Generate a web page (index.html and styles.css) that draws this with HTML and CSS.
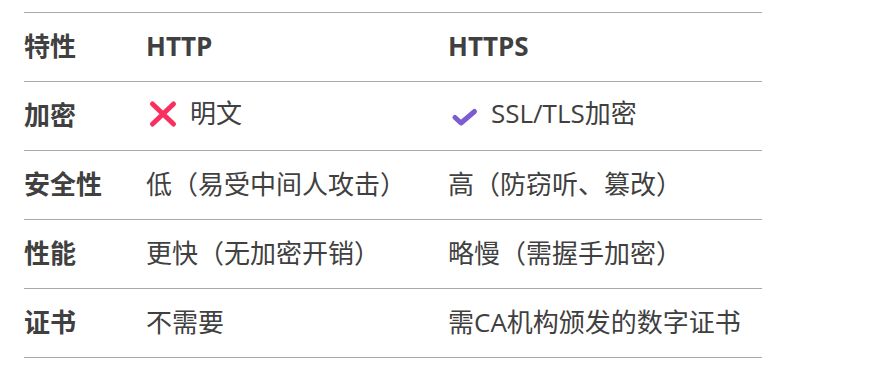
FILE: index.html
```html
<!DOCTYPE html>
<html lang="zh">
<head>
<meta charset="utf-8">
<link rel="stylesheet" href="styles.css">
</head>
<body>
<table class="compare">
  <colgroup>
    <col class="c1"><col class="c2"><col class="c3">
  </colgroup>
  <thead>
    <tr><th>特性</th><th>HTTP</th><th>HTTPS</th></tr>
  </thead>
  <tbody>
    <tr>
      <th>加密</th>
      <td><span class="icon-cell"><svg class="icon" viewBox="0 0 32 28" width="32" height="28"><path d="M6.5 4 L27.5 24 M27.5 4 L6.5 24" stroke="#f92f60" stroke-width="5" stroke-linecap="round" fill="none"/></svg>明文</span></td>
      <td><span class="icon-cell check"><svg class="icon" viewBox="0 0 32 28" width="32" height="28"><path d="M7 17.5 L13 23 L26.5 11.5" stroke="#7d5bd0" stroke-width="5" stroke-linecap="round" stroke-linejoin="round" fill="none"/></svg>SSL/TLS加密</span></td>
    </tr>
    <tr><th>安全性</th><td>低（易受中间人攻击）</td><td>高（防窃听、篡改）</td></tr>
    <tr><th>性能</th><td>更快（无加密开销）</td><td>略慢（需握手加密）</td></tr>
    <tr><th>证书</th><td>不需要</td><td>需CA机构颁发的数字证书</td></tr>
  </tbody>
</table>
</body>
</html>
```
FILE: styles.css
```css
html, body {
  margin: 0;
  padding: 0;
  background: #ffffff;
}
body {
  font-family: "Open Sans", "Noto Sans CJK SC", sans-serif;
  color: #404040;
}
.compare {
  border-collapse: collapse;
  width: 738px;
  margin: 12px 0 0 24px;
  font-size: 26px;
}
.c1 { width: 122px; }
.c2 { width: 302px; }
.c3 { width: 314px; }
.compare tr {
  border-top: 1px solid #a8a8a8;
  border-bottom: 1px solid #a8a8a8;
}
.compare th,
.compare td {
  height: 68px;
  padding: 0;
  text-align: left;
  vertical-align: middle;
  white-space: nowrap;
  line-height: 1.2;
}
.compare th {
  font-weight: 700;
}
.compare td {
  font-weight: 400;
}
.icon-cell {
  display: inline-flex;
  align-items: center;
  gap: 12px;
}
.icon-cell.check {
  gap: 11px;
}
.icon {
  display: block;
}
```
